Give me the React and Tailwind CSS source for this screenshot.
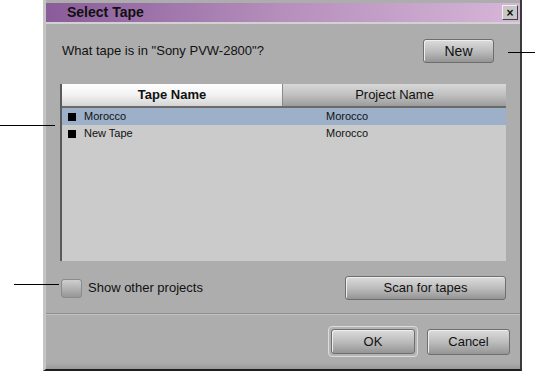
import React from "react";

const tapes = [
  { name: "Morocco", project: "Morocco", selected: true },
  { name: "New Tape", project: "Morocco", selected: false },
];

function Button({ children, className = "" }) {
  return (
    <button
      className={`h-[24px] rounded-[3px] border border-[#6e6e6e] bg-gradient-to-b from-[#dcdcdc] via-[#bdbdbd] to-[#959595] text-[13px] text-[#111] shadow-[inset_1px_1px_0_#eeeeee] ${className}`}
    >
      {children}
    </button>
  );
}

export default function App() {
  return (
    <div className="relative w-[535px] h-[373px] bg-white font-['Liberation_Sans',Arial,sans-serif] text-[#111] overflow-hidden">
      <div className="ml-[43px] w-[479px] h-[371px] pt-[3px] bg-[#adadad] border-l-[3px] border-l-[#c4c4c4] border-r-2 border-r-[#3a3a3a] border-b-2 border-b-[#1e1e1e] flex flex-col">
        {/* title bar */}
        <div className="h-[19px] flex items-center justify-between bg-gradient-to-r from-[#8a5c9a] via-[#b68fbc] to-[#d6b6d8] border-b-2 border-b-[#d2d2d2] box-content">
          <span className="pl-[21px] text-[14px] font-bold">Select Tape</span>
          <span className="mr-[2px] w-[16px] h-[15px] flex items-center justify-center bg-[#c6c6c6] border border-t-[#f0f0f0] border-l-[#f0f0f0] border-r-[#404040] border-b-[#404040] text-[12px] font-bold leading-none">
            ×
          </span>
        </div>

        {/* prompt row */}
        <div className="mt-[15px] flex items-center justify-between pl-[16px] pr-[26px]">
          <span className="text-[13px]">What tape is in "Sony PVW-2800"?</span>
          <Button className="w-[71px] h-[23px] text-[14px]">New</Button>
        </div>

        {/* tape table */}
        <div className="mt-[21px] ml-[14px] w-[446px] h-[177px] flex flex-col border-l-2 border-l-[#5a5a5a] bg-[#cbcbcb]">
          <div className="h-[24px] flex border-b-2 border-b-[#6a6a6a]">
            <div className="w-[221px] flex items-center justify-center bg-gradient-to-b from-white via-[#f2f2f2] to-[#d4d4d4] border-r border-r-[#8a8a8a] text-[13px] font-bold">
              Tape Name
            </div>
            <div className="flex-1 flex items-center justify-center bg-gradient-to-b from-[#d8d8d8] via-[#c0c0c0] to-[#9c9c9c] text-[13px]">
              Project Name
            </div>
          </div>
          {tapes.map((t) => (
            <div
              key={t.name}
              className={`h-[17px] flex items-center text-[11px] ${t.selected ? "bg-[#9db0c9]" : ""}`}
            >
              <span className="ml-[6px] w-[8px] h-[8px] bg-black" />
              <span className="ml-[8px] w-[242px]">{t.name}</span>
              <span>{t.project}</span>
            </div>
          ))}
        </div>

        {/* options row */}
        <div className="mt-[15px] flex items-center justify-between pl-[15px] pr-[14px]">
          <div className="flex items-center gap-[6px]">
            <span className="w-[21px] h-[19px] rounded-[3px] border border-[#8a8a8a] bg-gradient-to-b from-[#cfcfcf] to-[#979797]" />
            <span className="text-[13px]">Show other projects</span>
          </div>
          <Button className="w-[161px]">Scan for tapes</Button>
        </div>

        <div className="mt-[13px] h-[2px] border-t border-t-[#8f8f8f] border-b border-b-[#c2c2c2]" />

        {/* footer */}
        <div className="mt-[11px] flex items-center justify-end gap-[9px] pr-[10px]">
          <div className="p-[2px] rounded-[4px] border border-[#dcdcdc] bg-[#b4b4b4]">
            <Button className="w-[84px] h-[25px]">OK</Button>
          </div>
          <Button className="w-[83px] h-[26px]">Cancel</Button>
        </div>
        <div className="mt-auto h-[6px] bg-gradient-to-b from-[#adadad] to-[#9a9a9a]" />
      </div>

      {/* callout lines */}
      <div className="absolute left-[508px] top-[52px] w-[27px] h-px bg-black" />
      <div className="absolute left-0 top-[125px] w-[55px] h-px bg-black" />
      <div className="absolute left-[14px] top-[284px] w-[45px] h-px bg-black" />
    </div>
  );
}
